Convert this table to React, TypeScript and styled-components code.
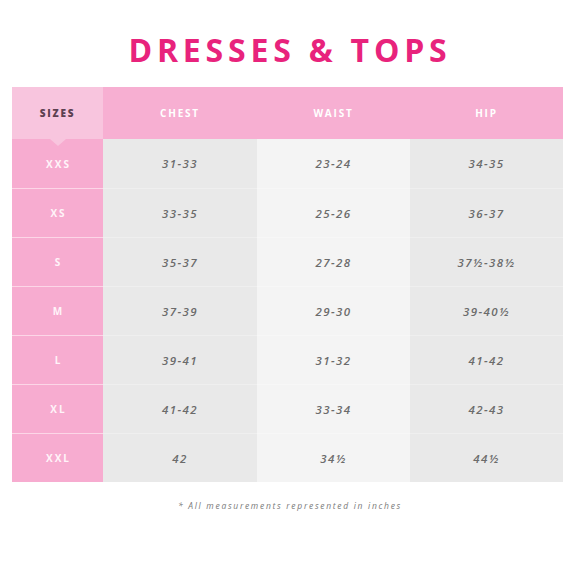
import styled, { createGlobalStyle } from 'styled-components';

const rows = [
  { size: 'XXS', chest: '31-33', waist: '23-24', hip: '34-35' },
  { size: 'XS', chest: '33-35', waist: '25-26', hip: '36-37' },
  { size: 'S', chest: '35-37', waist: '27-28', hip: '37½-38½' },
  { size: 'M', chest: '37-39', waist: '29-30', hip: '39-40½' },
  { size: 'L', chest: '39-41', waist: '31-32', hip: '41-42' },
  { size: 'XL', chest: '41-42', waist: '33-34', hip: '42-43' },
  { size: 'XXL', chest: '42', waist: '34½', hip: '44½' },
];

interface ICellProps {
  shade: 'dark' | 'light';
  first?: boolean;
}

const App = () => {
  return (
    <>
      <GlobalStyle />
      <Page>
        <Title>DRESSES &amp; TOPS</Title>
        <ChartGrid>
          <SizesHeader>
            SIZES
            <Pointer />
          </SizesHeader>
          <HeadCell>CHEST</HeadCell>
          <HeadCell>WAIST</HeadCell>
          <HeadCell>HIP</HeadCell>
          {rows.map((row, i) => (
            <Row key={row.size}>
              <SizeCell first={i === 0}>{row.size}</SizeCell>
              <ValueCell shade="dark" first={i === 0}>{row.chest}</ValueCell>
              <ValueCell shade="light" first={i === 0}>{row.waist}</ValueCell>
              <ValueCell shade="dark" first={i === 0}>{row.hip}</ValueCell>
            </Row>
          ))}
        </ChartGrid>
        <Note>* All measurements represented in inches</Note>
      </Page>
    </>
  );
};

const GlobalStyle = createGlobalStyle`
  html, body {
    margin: 0;
    padding: 0;
    background: #ffffff;
  }
  body {
    font-family: "Open Sans", "Liberation Sans", sans-serif;
  }
`;

const Page = styled.div`
  width: 580px;
  height: 580px;
  display: flex;
  flex-direction: column;
  align-items: center;
  box-sizing: border-box;
  padding-top: 28px;
`;

const Title = styled.h1`
  margin: 0 0 16px 0;
  font-family: "Open Sans", "Liberation Sans", sans-serif;
  font-weight: 700;
  font-size: 32px;
  line-height: 43px;
  letter-spacing: 4.8px;
  color: #e8237c;
`;

const ChartGrid = styled.div`
  display: grid;
  grid-template-columns: 91px 154px 153px 153px;
  grid-template-rows: 52px repeat(7, 49px);
  align-self: flex-start;
  margin-left: 12px;
`;

const Row = styled.div`
  display: contents;
`;

const HeadCell = styled.div`
  background: #f7afd2;
  color: #ffffff;
  display: flex;
  align-items: center;
  justify-content: center;
  font-weight: 700;
  font-size: 10px;
  letter-spacing: 1.8px;
`;

const SizesHeader = styled(HeadCell)`
  position: relative;
  background: #f8c5de;
  color: #5d4050;
  font-weight: 800;
`;

const Pointer = styled.span`
  position: absolute;
  left: 50%;
  bottom: -7px;
  margin-left: -8px;
  width: 0;
  height: 0;
  border-left: 8px solid transparent;
  border-right: 8px solid transparent;
  border-top: 7px solid #f8c5de;
  z-index: 1;
`;

const SizeCell = styled.div<{ first?: boolean }>`
  background: #f7acd0;
  color: #fff4f9;
  display: flex;
  align-items: center;
  justify-content: center;
  font-weight: 700;
  font-size: 10px;
  letter-spacing: 2px;
  padding-left: 2px;
  border-top: ${({ first }) => (first ? 'none' : '1px solid #fcd6e7')};
`;

const ValueCell = styled.div<ICellProps>`
  background: ${({ shade }) => (shade === 'dark' ? '#e9e9e9' : '#f4f4f4')};
  color: #6b6b6b;
  display: flex;
  align-items: center;
  justify-content: center;
  font-style: italic;
  font-weight: 600;
  font-size: 11.5px;
  letter-spacing: 1.4px;
  border-top: ${({ first, shade }) =>
    first ? 'none' : shade === 'dark' ? '1px solid #efefef' : '1px solid #f7f7f7'};
`;

const Note = styled.div`
  margin-top: 18px;
  font-style: italic;
  font-size: 8.5px;
  letter-spacing: 1.7px;
  color: #7a7a7a;
`;

export default App;
